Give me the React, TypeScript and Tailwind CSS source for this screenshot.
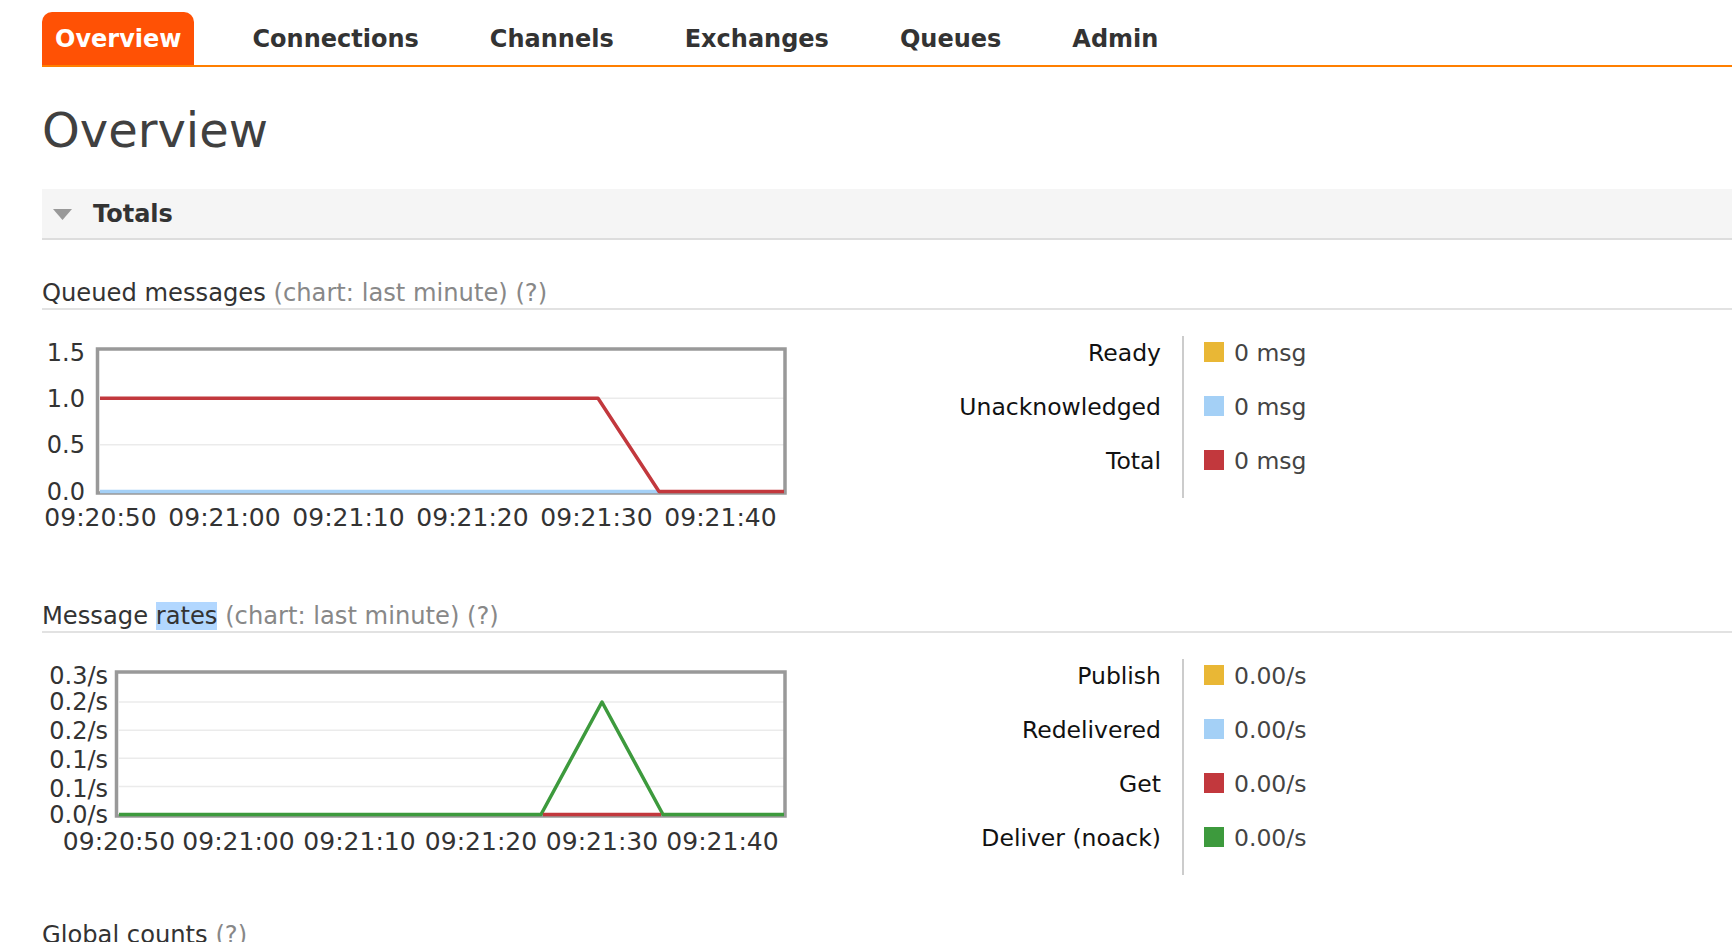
const tabs = ['Overview', 'Connections', 'Channels', 'Exchanges', 'Queues', 'Admin']

const colors = {
    yellow: '#e9b735',
    blue: '#a4d0f6',
    red: '#c2383d',
    green: '#3d9a3d',
}

interface LegendRow {
    label: string
    color: string
    value: string
}

function SectionHeading({ title, highlight, note }: { title: string; highlight?: string; note: string }) {
    return (
        <div className="pb-[1px] border-b-2 border-[#e2e2e2] text-[24.2px] leading-[28px] text-[#333]">
            {title}
            {highlight && (
                <>
                    {' '}
                    <span className="bg-[#b2d7ff]">{highlight}</span>
                </>
            )}{' '}
            <span className="text-[#888]">{note}</span>
        </div>
    )
}

function Legend({ rows }: { rows: LegendRow[] }) {
    return (
        <div className="flex">
            <div className="w-[261px] text-right text-[23.5px] leading-[28px] text-[#111]">
                {rows.map((r) => (
                    <div key={r.label} className="h-[54px] pt-[3px]">
                        {r.label}
                    </div>
                ))}
            </div>
            <div className="ml-[21px] border-l-2 border-[#cccccc] pl-[20px] text-[23.5px] leading-[28px] text-[#444]">
                {rows.map((r) => (
                    <div key={r.label} className="h-[54px] pt-[3px] flex items-start">
                        <span className="mt-[3px] w-[20px] h-[20px] mr-[10px]" style={{ backgroundColor: r.color }} />
                        {r.value}
                    </div>
                ))}
            </div>
        </div>
    )
}

const times = ['09:20:50', '09:21:00', '09:21:10', '09:21:20', '09:21:30', '09:21:40']

function QueuedChart() {
    const y = (v: number) => 156.5 - v * 93.3
    return (
        <svg width="760" height="200" className="block" fontFamily="'DejaVu Sans', sans-serif" fontSize="24">
            {[1, 0.5].map((v) => (
                <line key={v} x1="58" x2="742" y1={y(v)} y2={y(v)} stroke="#ebebeb" strokeWidth="1.5" />
            ))}
            <rect x="55.5" y="14" width="687.5" height="144" fill="none" stroke="#999" strokeWidth="3.5" />
            <polyline points={`58,${y(0)} 617,${y(0)}`} fill="none" stroke={colors.blue} strokeWidth="3.5" />
            <polyline
                points={`58,${y(1)} 556,${y(1)} 617,${y(0)} 742,${y(0)}`}
                fill="none"
                stroke={colors.red}
                strokeWidth="3.5"
                strokeLinejoin="round"
            />
            {[
                ['1.5', 18],
                ['1.0', 64],
                ['0.5', 110],
                ['0.0', 157],
            ].map(([t, cy]) => (
                <text key={t} x="43" y={cy} textAnchor="end" dominantBaseline="central" fill="#333">
                    {t}
                </text>
            ))}
            {times.map((t, i) => (
                <text key={t} x={58.5 + i * 124} y="182" textAnchor="middle" dominantBaseline="central" fill="#333" fontSize="25">
                    {t}
                </text>
            ))}
        </svg>
    )
}

function RatesChart() {
    const y = (v: number) => 156.5 - v * 562.5
    const xs = [77, 196.5, 317.5, 439, 560, 680.5]
    return (
        <svg width="760" height="200" className="block" fontFamily="'DejaVu Sans', sans-serif" fontSize="24">
            {[0.05, 0.1, 0.15, 0.2].map((v) => (
                <line key={v} x1="77" x2="742" y1={y(v)} y2={y(v)} stroke="#ebebeb" strokeWidth="1.5" />
            ))}
            <rect x="74.5" y="14" width="668.5" height="144" fill="none" stroke="#999" strokeWidth="3.5" />
            <polyline
                points={`77,${y(0)} 499,${y(0)} 560,${y(0.2)} 621,${y(0)} 742,${y(0)}`}
                fill="none"
                stroke={colors.green}
                strokeWidth="3.5"
                strokeLinejoin="round"
            />
            <line x1="501" x2="619" y1={y(0)} y2={y(0)} stroke={colors.red} strokeWidth="3.5" />
            {[
                ['0.3/s', 18],
                ['0.2/s', 44],
                ['0.2/s', 73],
                ['0.1/s', 102],
                ['0.1/s', 131],
                ['0.0/s', 157],
            ].map(([t, cy], i) => (
                <text key={i} x="66" y={cy} textAnchor="end" dominantBaseline="central" fill="#333">
                    {t}
                </text>
            ))}
            {times.map((t, i) => (
                <text key={t} x={xs[i]} y="183" textAnchor="middle" dominantBaseline="central" fill="#333" fontSize="25">
                    {t}
                </text>
            ))}
        </svg>
    )
}

export default function App() {
    return (
        <div className="min-h-screen bg-white pl-[42px] font-['DejaVu_Sans',sans-serif] overflow-hidden">
            {/* Menu */}
            <div className="pt-[12px] flex gap-[45px] border-b-2 border-[#ff7f00]">
                {tabs.map((t, i) => (
                    <div
                        key={t}
                        className={`h-[53px] px-[13px] flex items-center text-[24px] font-bold rounded-t-[10px] ${
                            i === 0 ? 'bg-[#ff5105] text-white' : 'text-[#333]'
                        }`}
                    >
                        {t}
                    </div>
                ))}
            </div>

            <h1 className="mt-[39px] text-[48px] leading-[48px] text-[#404040]">Overview</h1>

            {/* Totals */}
            <div className="mt-[35px] h-[51px] bg-[#f5f5f5] border-b-2 border-[#dddddd] flex items-center pl-[11px]">
                <svg width="19" height="12" viewBox="0 0 19 12" className="mt-[3px]">
                    <polygon points="0,0 19,0 9.5,11" fill="#999" />
                </svg>
                <span className="ml-[21px] text-[24px] font-bold text-[#333]">Totals</span>
            </div>

            <div className="mt-[39px]">
                <SectionHeading title="Queued messages" note="(chart: last minute) (?)" />
            </div>
            <div className="mt-[25px] h-[200px] flex">
                <div className="w-[858px]">
                    <QueuedChart />
                </div>
                <div className="mt-[1px]">
                    <Legend
                        rows={[
                            { label: 'Ready', color: colors.yellow, value: '0 msg' },
                            { label: 'Unacknowledged', color: colors.blue, value: '0 msg' },
                            { label: 'Total', color: colors.red, value: '0 msg' },
                        ]}
                    />
                </div>
            </div>

            <div className="mt-[67px]">
                <SectionHeading title="Message" highlight="rates" note="(chart: last minute) (?)" />
            </div>
            <div className="mt-[25px] h-[217px] flex">
                <div className="w-[858px]">
                    <RatesChart />
                </div>
                <div className="mt-[1px]">
                    <Legend
                        rows={[
                            { label: 'Publish', color: colors.yellow, value: '0.00/s' },
                            { label: 'Redelivered', color: colors.blue, value: '0.00/s' },
                            { label: 'Get', color: colors.red, value: '0.00/s' },
                            { label: 'Deliver (noack)', color: colors.green, value: '0.00/s' },
                        ]}
                    />
                </div>
            </div>

            <div className="mt-[46px]">
                <SectionHeading title="Global counts" note="(?)" />
            </div>
        </div>
    )
}
